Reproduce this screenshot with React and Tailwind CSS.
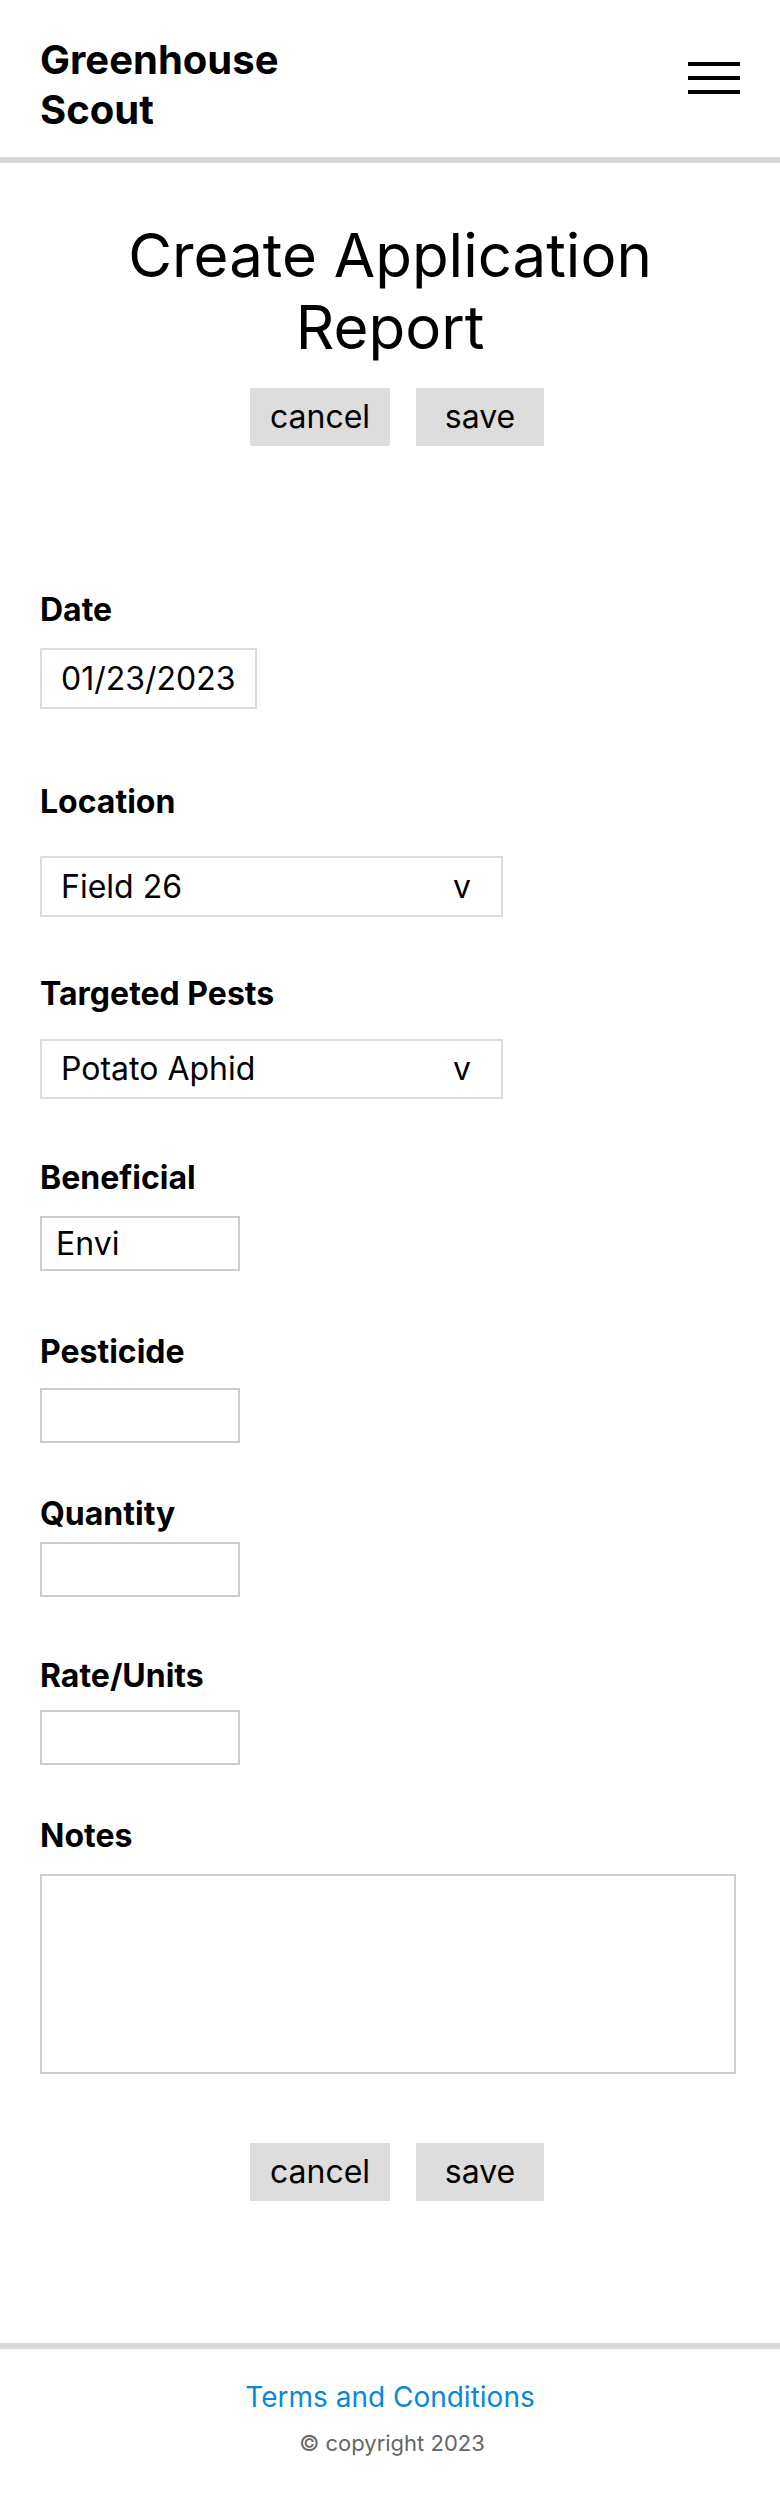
import React from "react";

function Label({ children, className = "" }) {
  return (
    <div className={`text-[32px] leading-[38px] font-bold text-black ${className}`}>
      {children}
    </div>
  );
}

function TextBox({ value = "", className = "" }) {
  return (
    <input
      type="text"
      readOnly
      defaultValue={value}
      className={`block w-[200px] h-[55px] border-2 border-[#cccccc] bg-white pl-[14px] text-[32px] leading-[38px] text-black outline-none ${className}`}
    />
  );
}

function Select({ value, className = "" }) {
  return (
    <div
      className={`flex w-[463px] items-center justify-between border-2 border-[#dcdcdc] pl-[19px] pr-[30px] text-[32px] leading-[38px] text-black ${className}`}
    >
      <span>{value}</span>
      <span>v</span>
    </div>
  );
}

function Buttons({ className = "" }) {
  return (
    <div className={`flex justify-center gap-[26px] pl-[14px] ${className}`}>
      <button className="h-[58px] w-[140px] bg-[#dddddd] text-[32px] leading-[38px] text-black">
        cancel
      </button>
      <button className="h-[58px] w-[128px] bg-[#dddddd] text-[32px] leading-[38px] text-black">
        save
      </button>
    </div>
  );
}

export default function App() {
  return (
    <div className="w-[780px] bg-white font-['Inter',sans-serif] text-black">
      <header className="flex items-start justify-between border-b-[6px] border-[#d9d9d9] px-[40px] pt-[35px] pb-[22px]">
        <div className="text-[40px] leading-[50px] font-bold">
          Greenhouse
          <br />
          Scout
        </div>
        <button className="mt-[27px] flex w-[52px] flex-col gap-[10px]" aria-label="menu">
          <span className="block h-[4px] w-full bg-black" />
          <span className="block h-[4px] w-full bg-black" />
          <span className="block h-[4px] w-full bg-black" />
        </button>
      </header>

      <main className="px-[40px]">
        <h1 className="mt-[56px] text-center text-[60px] leading-[72px] font-normal">
          Create Application
          <br />
          Report
        </h1>
        <Buttons className="mt-[25px]" />

        <Label className="mt-[145px]">Date</Label>
        <div className="mt-[19px] flex h-[61px] w-[217px] items-center border-2 border-[#dcdcdc] pl-[19px] text-[32px] leading-[38px]">
          01/23/2023
        </div>

        <Label className="mt-[74px]">Location</Label>
        <Select value="Field 26" className="mt-[35px] h-[61px]" />

        <Label className="mt-[58px]">Targeted Pests</Label>
        <Select value="Potato Aphid" className="mt-[26px] h-[60px]" />

        <Label className="mt-[60px]">Beneficial</Label>
        <TextBox value="Envi" className="mt-[19px]" />

        <Label className="mt-[62px]">Pesticide</Label>
        <TextBox className="mt-[17px]" />

        <Label className="mt-[52px]">Quantity</Label>
        <TextBox className="mt-[9px]" />

        <Label className="mt-[60px]">Rate/Units</Label>
        <TextBox className="mt-[15px]" />

        <Label className="mt-[52px]">Notes</Label>
        <textarea
          readOnly
          className="mt-[19px] block h-[200px] w-[696px] resize-none border-2 border-[#cccccc] bg-white outline-none"
        />

        <Buttons className="mt-[69px]" />
      </main>

      <footer className="mt-[142px] border-t-[6px] border-[#d9d9d9] pt-[31px] pb-[37px] text-center">
        <a href="#" className="block text-[28px] leading-[34px] text-[#0a88d8]">
          Terms and Conditions
        </a>
        <div className="mt-[16px] pl-[4px] text-[22px] leading-[26px] text-[#666666]">© copyright 2023</div>
      </footer>
    </div>
  );
}
